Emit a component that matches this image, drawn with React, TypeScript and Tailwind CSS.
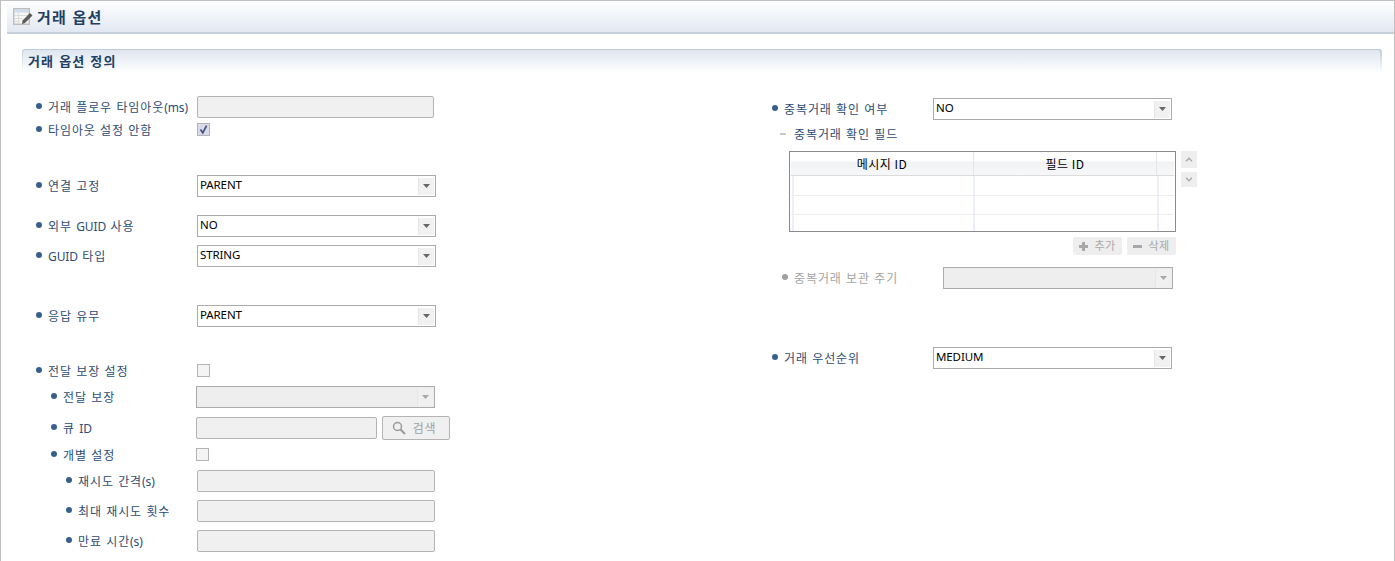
import React from "react";

const font = { fontFamily: '"Noto Sans CJK KR", sans-serif' };

function Bullet({ gray }: { gray?: boolean }) {
  return <span className={`block w-[6px] h-[6px] rounded-full shrink-0 -translate-y-[1px] ${gray ? "bg-[#a0a0a0]" : "bg-[#375f8e]"}`} />;
}

function Label({ children, gray }: { children: string; gray?: boolean }) {
  const parts = children.split(/([A-Za-z()]+)/).filter(Boolean);
  return (
    <span className={`text-[12px] leading-[16px] tracking-[0.9px] [word-spacing:0.75px] whitespace-nowrap ${gray ? "text-[#a3a3a3]" : "text-[#2d4d74]"}`}>
      {parts.map((p, i) =>
        /[A-Za-z()]/.test(p) ? (
          <span key={i} className="tracking-[-0.1px] text-[12px]" style={{ fontFamily: '"Noto Sans", sans-serif' }}>{p}</span>
        ) : (
          <span key={i}>{p}</span>
        )
      )}
    </span>
  );
}

function Arrow({ disabled }: { disabled?: boolean }) {
  return (
    <span className={`flex items-center justify-center w-[16px] h-[17px] shrink-0 border-l border-[#e6e6e6] ${disabled ? "bg-[#f0f0f0]" : "bg-[#f1f1f1]"}`}>
      <svg width="7" height="4" viewBox="0 0 7 4">
        <path d="M0 0h7L3.5 4z" fill={disabled ? "#a8a8a8" : "#666666"} />
      </svg>
    </span>
  );
}

function Select({ value, disabled, className }: { value?: string; disabled?: boolean; className: string }) {
  return (
    <div className={`flex items-center justify-between h-[22px] border border-[#ababab] pl-[2px] pr-[1px] shrink-0 ${disabled ? "bg-[#eeeeee]" : "bg-white"} ${className}`}>
      <span className="text-[11.5px] text-black leading-[18px] tracking-[-0.1px] -translate-y-[1px]" style={{ fontFamily: '"Noto Sans", sans-serif' }}>{value}</span>
      <Arrow disabled={disabled} />
    </div>
  );
}

function Input({ className }: { className: string }) {
  return <div className={`h-[22px] bg-[#f0f0f0] border border-[#b4b4b4] rounded-[2px] shrink-0 ${className}`} />;
}

function Check({ checked, className }: { checked?: boolean; className?: string }) {
  return (
    <div className={`flex items-center justify-center w-[13px] h-[13px] border border-[#b4b4b4] bg-[#f4f4f4] shrink-0 ${className ?? ""}`}>
      {checked && (
        <svg width="11" height="11" viewBox="0 0 11 11">
          <rect width="11" height="11" fill="#d8dce8" />
          <path d="M2.5 5.5 L4.8 8.8 L8.6 1.6" stroke="#44507e" strokeWidth="1.7" fill="none" />
        </svg>
      )}
    </div>
  );
}

function TitleIcon() {
  return (
    <svg width="20" height="18" viewBox="0 0 20 18" className="shrink-0">
      <rect x="0.75" y="0.75" width="15.5" height="15.5" fill="#f6f6f6" stroke="#bdbdbd" strokeWidth="1.5" />
      <rect x="1.5" y="1.5" width="14" height="3" fill="#cfdcec" />
      <path d="M1.5 7.5h14M1.5 10.5h8M1.5 13.5h5M5.5 4.5v11" stroke="#dcdcdc" fill="none" />
      <path d="M9.5 12.5 L17 5 L19.5 7.5 L12 15 L9 16z" fill="#5c5c5c" />
    </svg>
  );
}

function Row({ className, indent, label, children, gray }: { className: string; indent: string; label: string; children: React.ReactNode; gray?: boolean }) {
  return (
    <div className={`flex items-center ${className}`}>
      <div className={`flex items-center gap-[6px] h-full ${indent}`}>
        <Bullet gray={gray} />
        <Label gray={gray}>{label}</Label>
      </div>
      {children}
    </div>
  );
}

function GridRow({ className }: { className: string }) {
  return (
    <div className={`flex w-[383px] ml-[1px] ${className}`}>
      <div className="w-[2px] ml-[1px] bg-[#ebf0f8]" />
      <div className="w-[179px]" />
      <div className="w-[2px] bg-[#ebf0f8]" />
      <div className="w-[182px]" />
      <div className="w-[2px] bg-[#ebf0f8]" />
    </div>
  );
}

export default function App() {
  return (
    <div className="w-[1395px] h-[561px] overflow-hidden bg-white border-t border-l border-r border-[#c0c0c0]" style={font}>
      <div className="ml-[6px] h-[33px] border-b-2 border-[#c5d2de]">
        <div className="flex items-center h-[31px] bg-gradient-to-b from-white to-[#e2e8f2] pl-[6px] gap-[4px]">
          <TitleIcon />
          <span className="text-[15px] font-bold text-[#1e3f66] tracking-[1.2px] [word-spacing:1px] leading-[20px]">거래 옵션</span>
        </div>
      </div>

      <div className="ml-[21px] mr-[12px] mt-[15px] h-[24px] p-[1px] pb-0 rounded-t-[3px] bg-gradient-to-b from-[#bccbd9] to-white">
        <div className="flex items-center h-[23px] mr-[1px] rounded-t-[2px] bg-gradient-to-b from-[#dfe6f0] to-white pl-[5px]">
          <span className="text-[13px] font-bold text-[#1e3f66] tracking-[1.1px] [word-spacing:1px] leading-[18px] -translate-y-[1px]">거래 옵션 정의</span>
        </div>
      </div>

      <div className="flex items-start">
        <div className="w-[770px] shrink-0 pt-[23px]">
          <Row className="h-[22px]" indent="w-[196px] pl-[35px]" label="거래 플로우 타임아웃(ms)">
            <Input className="w-[237px]" />
          </Row>
          <Row className="h-[13px] mt-[5px]" indent="w-[196px] pl-[35px]" label="타임아웃 설정 안함">
            <Check checked />
          </Row>
          <Row className="h-[22px] mt-[39px]" indent="w-[196px] pl-[35px]" label="연결 고정">
            <Select value="PARENT" className="w-[239px]" />
          </Row>
          <Row className="h-[22px] mt-[18px]" indent="w-[196px] pl-[35px]" label="외부 GUID 사용">
            <Select value="NO" className="w-[239px]" />
          </Row>
          <Row className="h-[22px] mt-[8px]" indent="w-[196px] pl-[35px]" label="GUID 타입">
            <Select value="STRING" className="w-[239px]" />
          </Row>
          <Row className="h-[22px] mt-[38px]" indent="w-[196px] pl-[35px]" label="응답 유무">
            <Select value="PARENT" className="w-[239px]" />
          </Row>
          <Row className="h-[13px] mt-[37px]" indent="w-[196px] pl-[35px]" label="전달 보장 설정">
            <Check />
          </Row>
          <Row className="h-[22px] mt-[9px]" indent="w-[195px] pl-[50px]" label="전달 보장">
            <Select disabled className="w-[239px]" />
          </Row>
          <Row className="h-[22px] mt-[9px]" indent="w-[195px] pl-[50px]" label="큐 ID">
            <Input className="w-[181px]" />
            <div className="flex items-center justify-center gap-[7px] w-[68px] h-[24px] ml-[5px] pr-[4px] bg-[#f0f0f0] border border-[#b4b4b4] rounded-[2px]">
              <svg width="14" height="14" viewBox="0 0 14 14" fill="none" stroke="#9a9a9a">
                <circle cx="5.5" cy="5.5" r="4" strokeWidth="1.5" />
                <path d="M8.5 8.5L13 13" strokeWidth="2" />
              </svg>
              <span className="text-[12px] text-[#a0a0a0] leading-[16px] tracking-[0.8px]">검색</span>
            </div>
          </Row>
          <Row className="h-[13px] mt-[9px]" indent="w-[195px] pl-[50px]" label="개별 설정">
            <Check />
          </Row>
          <Row className="h-[22px] mt-[9px]" indent="w-[196px] pl-[65px]" label="재시도 간격(s)">
            <Input className="w-[238px]" />
          </Row>
          <Row className="h-[22px] mt-[8px]" indent="w-[196px] pl-[65px]" label="최대 재시도 횟수">
            <Input className="w-[238px]" />
          </Row>
          <Row className="h-[22px] mt-[8px]" indent="w-[196px] pl-[65px]" label="만료 시간(s)">
            <Input className="w-[238px]" />
          </Row>
        </div>

        <div className="flex-1 pt-[25px]">
          <Row className="h-[22px]" indent="w-[162px] pl-[1px]" label="중복거래 확인 여부">
            <Select value="NO" className="w-[239px]" />
          </Row>
          <div className="flex items-center h-[16px] mt-[6px] pl-[9px] gap-[8px]">
            <span className="block w-[6px] h-[2px] bg-[#c8c8c8]" />
            <Label>중복거래 확인 필드</Label>
          </div>

          <div className="flex items-start ml-[18px] mt-[9px]">
            <div className="w-[387px] h-[81px] border border-[#8a8a8e] bg-white shrink-0">
              <div className="flex w-[383px] h-[23px] ml-[1px] bg-[linear-gradient(to_bottom,#ffffff_9px,#f0f2f4_10px,#f7f8f9_23px)] text-[12px] leading-[14px] text-black">
                <span className="w-[183px] h-[23px] pt-[5px] text-center border-r border-[#e6e6e6] tracking-[0.5px]">메시지 ID</span>
                <span className="w-[183px] h-[23px] pt-[5px] text-center border-r border-[#e6e6e6] tracking-[0.5px]">필드 ID</span>
              </div>
              <div className="h-[1px] w-[383px] ml-[1px] bg-[#dcdcdc]" />
              <GridRow className="h-[20px] border-b border-[#eeeeee]" />
              <GridRow className="h-[19px] border-b border-[#eeeeee]" />
              <GridRow className="h-[16px]" />
            </div>
            <div className="flex flex-col gap-[4px] ml-[5px]">
              <div className="flex items-center justify-center w-[16px] h-[17px] bg-[#eeeeee]">
                <svg width="8" height="5" viewBox="0 0 8 5" fill="none" stroke="#a8a8a8" strokeWidth="1.3"><path d="M1 4.2L4 1.2L7 4.2" /></svg>
              </div>
              <div className="flex items-center justify-center w-[16px] h-[15px] bg-[#eeeeee]">
                <svg width="8" height="5" viewBox="0 0 8 5" fill="none" stroke="#a8a8a8" strokeWidth="1.3"><path d="M1 0.8L4 3.8L7 0.8" /></svg>
              </div>
            </div>
          </div>

          <div className="flex justify-end gap-[5px] w-[405px] mt-[5px]">
            <div className="flex items-center justify-center gap-[6px] w-[49px] h-[18px] bg-[#eeeeee] rounded-[2px]">
              <svg width="9" height="9" viewBox="0 0 9 9"><path d="M3 0h3v3h3v3H6v3H3V6H0V3h3z" fill="#a8a8a8" /></svg>
              <span className="text-[11px] leading-[14px] text-[#a8a8a8] tracking-[0.5px] -translate-y-[1px]">추가</span>
            </div>
            <div className="flex items-center justify-center gap-[6px] w-[49px] h-[18px] bg-[#eeeeee] rounded-[2px]">
              <svg width="9" height="3" viewBox="0 0 9 3"><rect width="9" height="3" fill="#a8a8a8" /></svg>
              <span className="text-[11px] leading-[14px] text-[#a8a8a8] tracking-[0.5px] -translate-y-[1px]">삭제</span>
            </div>
          </div>

          <Row className="h-[22px] mt-[12px]" indent="w-[172px] pl-[11px]" label="중복거래 보관 주기" gray>
            <Select disabled className="w-[230px]" />
          </Row>
          <Row className="h-[22px] mt-[58px]" indent="w-[162px] pl-[1px]" label="거래 우선순위">
            <Select value="MEDIUM" className="w-[239px]" />
          </Row>
        </div>
      </div>
    </div>
  );
}
